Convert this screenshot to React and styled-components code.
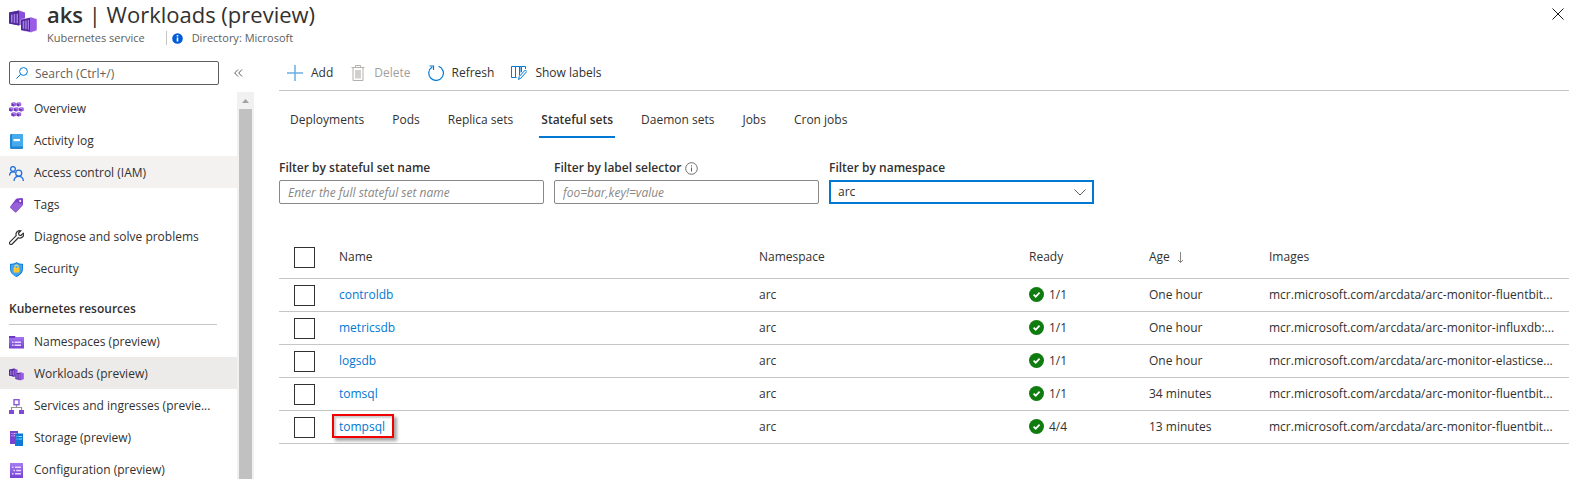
import React from "react";
import styled, { createGlobalStyle, css } from "styled-components";

const GlobalStyle = createGlobalStyle`
  *, *::before, *::after { box-sizing: border-box; }
  html, body { margin: 0; background: #fff; }
  body, button, input, select {
    font-family: "Open Sans", "Noto Sans", sans-serif;
    font-size: 12px;
    line-height: 16px;
    color: #323130;
  }
  button { border: 0; padding: 0; background: none; }
  a { text-decoration: none; color: inherit; }
`;

const Page = styled.div`
  display: flex;
  flex-direction: column;
  height: 100vh;
  overflow: hidden;
`;

const Header = styled.header`
  display: flex;
  flex: none;
  height: 52px;
  padding: 0 19px 0 9px;
`;

const HeaderIcon = styled.span`
  width: 38px;
  padding-top: 10px;
`;

const Titles = styled.div`
  flex: 1;
`;

const Title = styled.h1`
  margin: 0;
  font-size: 22px;
  line-height: 28px;
  font-weight: 400;
  white-space: nowrap;
  b { font-weight: 600; }
`;

const Subtitle = styled.div`
  display: flex;
  align-items: center;
  height: 20px;
  font-size: 11px;
  color: #605e5c;
  svg { margin-right: 9px; }
`;

const Divider = styled.span`
  width: 1px;
  height: 14px;
  margin: 0 5px 0 21px;
  background: #c8c6c4;
`;

const Close = styled.button`
  align-self: flex-start;
  height: 12px;
  width: 12px;
  margin-top: 8px;
  line-height: 0;
`;

const Body = styled.div`
  display: flex;
  flex: 1;
  min-height: 0;
`;

const Sidebar = styled.aside`
  display: flex;
  flex: none;
  flex-direction: column;
  width: 254px;
`;

const SearchRow = styled.div`
  display: flex;
  align-items: center;
  flex: none;
  gap: 15px;
  height: 40px;
  padding: 2px 0 0 9px;
`;

const SearchBox = styled.label`
  display: flex;
  align-items: center;
  gap: 7px;
  width: 210px;
  height: 24px;
  padding: 0 6px;
  border: 1px solid #605e5c;
  border-radius: 2px;
  input {
    flex: 1;
    min-width: 0;
    padding: 1px 0 0;
    border: 0;
    outline: 0;
    &::placeholder { color: #605e5c; opacity: 1; }
  }
`;

const CollapseButton = styled.button`
  line-height: 0;
`;

const NavArea = styled.div`
  display: flex;
  flex: 1;
  min-height: 0;
`;

const Nav = styled.nav`
  flex: 1;
  min-width: 0;
  overflow: hidden;
`;

const NavItem = styled.a`
  display: flex;
  align-items: center;
  gap: 10px;
  height: 32px;
  padding: 2px 0 0 9px;
  white-space: nowrap;
  background: ${(p) => (p.$state === "active" ? "#edebe9" : p.$state === "hover" ? "#f3f2f1" : "transparent")};
  svg { flex: none; }
`;

const NavHeading = styled.h2`
  margin: 0 20px 0 9px;
  padding: 17px 0 7px;
  border-bottom: 1px solid #c8c6c4;
  font-size: 12px;
  line-height: 16px;
  font-weight: 600;
`;

const ScrollTrack = styled.div`
  display: flex;
  flex-direction: column;
  align-items: center;
  width: 17px;
  background: #f1f1f1;
  svg { flex: none; }
`;

const ScrollThumb = styled.div`
  flex: 1;
  width: 13px;
  background: #c1c1c1;
`;

const Main = styled.main`
  flex: 1;
  min-width: 0;
  padding: 0 14px 0 25px;
`;

const Toolbar = styled.div`
  display: flex;
  align-items: center;
  gap: 17px;
  height: 39px;
  padding: 4px 8px 0;
  border-bottom: 1px solid #c8c6c4;
`;

const ToolButton = styled.button`
  display: flex;
  align-items: center;
  gap: 8px;
  color: ${(p) => (p.disabled ? "#a19f9d" : "#323130")};
`;

const Tabs = styled.div`
  display: flex;
  gap: 24px;
  margin-top: 13px;
  padding-left: 9px;
`;

const Tab = styled.button`
  height: 34px;
  padding: 0 2px;
  border-bottom: 2px solid transparent;
  ${(p) =>
    p.$selected &&
    css`
      border-color: #0078d4;
      font-weight: 600;
    `}
`;

const Filters = styled.div`
  display: flex;
  gap: 10px;
  margin-top: 22px;
`;

const Filter = styled.div`
  width: 265px;
  label {
    display: flex;
    align-items: center;
    gap: 4px;
    height: 16px;
    margin-bottom: 4px;
    font-weight: 600;
  }
`;

const TextInput = styled.input`
  width: 100%;
  height: 24px;
  padding: 0 8px;
  border: 1px solid #8a8886;
  border-radius: 2px;
  &::placeholder { color: #8a8886; opacity: 1; font-style: italic; }
`;

const SelectBox = styled.div`
  display: grid;
  align-items: center;
  select, svg { grid-area: 1 / 1; }
  svg { justify-self: end; margin-right: 8px; pointer-events: none; }
`;

const Select = styled.select`
  appearance: none;
  width: 100%;
  height: 24px;
  padding: 0 7px;
  border: 2px solid #0078d4;
  background: #fff;
`;

const Table = styled.table`
  width: 100%;
  margin-top: 31px;
  border-collapse: collapse;
  table-layout: fixed;
  th, td {
    padding: 0;
    border-bottom: 1px solid #c8c6c4;
    text-align: left;
    white-space: nowrap;
  }
  th { height: 43px; padding-top: 1px; font-weight: 500; }
  th svg { margin-left: 3px; vertical-align: -2px; }
  td { height: 33px; }
`;

const Col = styled.col`
  width: ${(p) => p.$width};
`;

const Check = styled.input`
  appearance: none;
  display: block;
  width: 21px;
  height: 21px;
  margin: 2px 0 0 15px;
  border: 1px solid #323130;
  background: #fff;
`;

const ReadyCell = styled.span`
  display: flex;
  align-items: center;
  gap: 5px;
`;

const ResourceLink = styled.a`
  position: relative;
  color: #0078d4;
  ${(p) =>
    p.$marked &&
    css`
      &::after {
        content: "";
        position: absolute;
        inset: -4px -9px -3px -7px;
        border: 2px solid #f00000;
        box-shadow: 3px 3px 3px rgba(0, 0, 0, 0.35), inset 2px 2px 2px rgba(0, 0, 0, 0.2);
      }
    `}
`;

const WorkloadIcon = ({ width, height }) => (
  <svg width={width} height={height} viewBox="0 0 28 22" aria-hidden="true">
    <path d="M0 2 10 0l6 2v11l-6 2-10-2Z" fill="#8a4fdb" />
    <path d="M0 2 10 0v15L0 13Z" fill="#4f2a96" />
    <path d="M2 4h1.500v8H2zM4.700 3.600h1.500v8.800H4.700zM7.500 3.200H9v9.600H7.500z" fill="#a57be8" />
    <path d="M12 9 22 6.500l6 2V20l-6 2-10-2Z" fill="#9a5be6" stroke="#fff" strokeWidth=".5" />
    <path d="M12 9.300 21 7.500v13.500l-9-1.500Z" fill="#4f2a96" />
    <path d="M13.700 10.500h1.600v7.800h-1.600zM16.200 10h1.500v8.800h-1.500zM18.700 9.500H20v9.800h-1.300z" fill="#a57be8" />
  </svg>
);

const PurpleGradient = ({ id }) => (
  <defs>
    <linearGradient id={id} x1="0" y1="0" x2="0" y2="1">
      <stop offset="0" stopColor="#a67af4" />
      <stop offset="1" stopColor="#7541d3" />
    </linearGradient>
  </defs>
);

const navIcons = {
  overview: (
    <g>
      {[[4.800, 2.300], [9.900, 2.300], [2.300, 7.300], [7.400, 7.300], [12.500, 7.300], [4.800, 12.300], [9.900, 12.300]].map(([x, y]) => (
        <g key={`${x}-${y}`} transform={`translate(${x} ${y})`}>
          <path d="M-2.300-1.400 0-2.200l2.300.8v2.800L0 2.200l-2.300-.8Z" fill="#9b5fe0" />
          <path d="M-2.300-1.400 0-.6v2.800l-2.300-.8Z" fill="#6a35b5" />
          <path d="M-2.300-1.400 0-2.200l2.300.8L0-.6Z" fill="#b99af0" />
        </g>
      ))}
    </g>
  ),
  log: (
    <g>
      <rect x="1" y="0" width="13" height="15" rx="1.200" fill="#2286d3" />
      <path d="M3 0h10q1 0 1 1v11.500H3z" fill="#45abec" />
      <rect x="4.500" y="5" width="6.500" height="2.200" fill="#fff" />
    </g>
  ),
  access: (
    <g fill="none" stroke="#1f6fe0" strokeWidth="1.300">
      <circle cx="4" cy="3" r="2.400" />
      <path d="M.6 9.500C.6 7 2 5.800 4 5.800c.8 0 1.500.2 2 .6" />
      <circle cx="9.700" cy="7.200" r="3" />
      <path d="M5 15c.2-3 2-4.600 4.700-4.600s4.500 1.600 4.700 4.600" />
    </g>
  ),
  tags: (
    <g>
      <path d="M8 .5 13 0q1 0 1 1v5.500q0 .6-.4 1L7.200 14.300q-.6.500-1.200 0L1.300 9.700q-.5-.6 0-1.200L7 1Q7.400.5 8 .5Z" fill="#7d42c8" />
      <path d="M7 4 1.300 8.800 6.500 14 14 6.500Z" fill="#a878e2" opacity=".6" />
      <circle cx="11.200" cy="3" r="1" fill="#fff" />
    </g>
  ),
  wrench: (
    <path
      d="M14.300 3.200 12 5.500l-2-.5-.5-2L11.800.8C9.500.1 7.300 1.500 7 3.800c-.1.700 0 1.300.2 1.900L1 11.900c-.7.700-.7 1.600-.1 2.200s1.600.6 2.300-.1l6.100-6.200c2.800 1 5.700-1 5.400-3.800q0-.5-.4-.8Z"
      fill="none" stroke="#323130" strokeWidth="1.200"
    />
  ),
  security: (
    <g>
      <path d="M7.500 0C9.500 1.500 12 1.700 14 1.800V7c0 4-3.500 6.500-6.500 8C4.500 13.500 1 11 1 7V1.800C3 1.700 5.500 1.500 7.500 0Z" fill="#1482d8" />
      <path d="M7.500 1.200C9.300 2.400 11.300 2.700 13 2.800V7c0 3.300-2.800 5.400-5.500 6.800S2 10.300 2 7V2.800c1.700-.1 3.700-.4 5.500-1.600Z" fill="#42a5ee" />
      <rect x="4.600" y="5.800" width="5.800" height="4.600" rx=".6" fill="#ffc72c" />
      <path d="M5.900 6V4.700a1.600 1.600 0 0 1 3.200 0V6" fill="none" stroke="#ffd968" strokeWidth="1.100" />
    </g>
  ),
  namespaces: (
    <g>
      <PurpleGradient id="gNamespace" />
      <path d="M0 1h6l1 1h8v11.500H0Z" fill="url(#gNamespace)" />
      <path d="M0 1h6v2H0Z" fill="#6d38c4" />
      <path d="M3 6.500h1.500V8H3zM5.500 6.500H12V8H5.500zM3 9.500h1.500V11H3zM5.500 9.500H12V11H5.500z" fill="#e4d8fb" />
    </g>
  ),
  services: (
    <g>
      <path d="M7.500 5v4M2.500 11V8.500h10V11" fill="none" stroke="#949494" strokeWidth="1.200" />
      <rect x="5" y=".7" width="5" height="5" fill="#fff" stroke="#8a56dc" strokeWidth="1.400" />
      <rect x="0" y="11" width="5" height="4" fill="#7f49d6" />
      <rect x="10" y="11" width="5" height="4" fill="#7f49d6" />
    </g>
  ),
  storage: (
    <g>
      <rect x="1" y="0" width="8" height="13" fill="#7a43cf" />
      <path d="M2.500 2h1v1h-1zM4.500 2H8v1H4.500zM2.500 4.200h1v1h-1zM4.500 4.200H8v1H4.500z" fill="#d5c2f7" />
      <rect x="6" y="2.500" width="8" height="12.500" fill="#0f7ad4" />
      <path d="M7.500 5h1v1h-1zM9.500 5H13v1H9.500zM7.500 7.500h1v1h-1zM9.500 7.500H13v1H9.500z" fill="#8fe0ff" />
    </g>
  ),
  config: (
    <g>
      <PurpleGradient id="gConfig" />
      <rect x="1" y="0" width="13" height="15" fill="url(#gConfig)" />
      <path d="M3 3.500h1.500V5H3zM6 3.500h6V5H6zM4.500 6.800H6v1.400H4.500zM7.200 6.800H12v1.400H7.200zM3 10h1.500v1.500H3zM6 10h6v1.500H6z" fill="#e4d8fb" />
    </g>
  ),
};

const NavIcon = ({ name }) =>
  name === "workloads" ? (
    <WorkloadIcon width={15} height={15} />
  ) : (
    <svg width="15" height="15" viewBox="0 0 15 15" aria-hidden="true">{navIcons[name]}</svg>
  );

const toolIcons = {
  add: <path d="M8 0v16M0 8h16" stroke="#69afe5" strokeWidth="1.500" fill="none" />,
  remove: (
    <g fill="none" stroke="#b3b0ad">
      <path d="M1.500 2.500h13M5.500 2V.5h5V2M3 3v12.500h10V3" />
      <path d="M6 5v8.500M8 5v8.500M10 5v8.500" strokeWidth="1.200" />
    </g>
  ),
  refresh: (
    <g fill="none" stroke="#0078d4" strokeWidth="1.200">
      <path d="M10.500 1.200A7.300 7.300 0 1 1 4.200 1.900" />
      <path d="M1.500 1h4v4" />
    </g>
  ),
  labels: (
    <g fill="none" stroke="#0078d4">
      <path d="M.5 1.500h4v11h-4zM5.500 12.500h-1v-11h4v9M8.500 9.500v-8h1.500v6M10.500 7V1.500h4V4" />
      <path d="m7.500 14.500.8-3 6-6.500 1.500 1.500-6 6.700Z" fill="#fff" />
    </g>
  ),
};

const ToolIcon = ({ name }) => (
  <svg width="16" height="16" viewBox="0 0 16 16" aria-hidden="true">{toolIcons[name]}</svg>
);

const generalNav = [
  ["overview", "Overview"],
  ["log", "Activity log"],
  ["access", "Access control (IAM)", "hover"],
  ["tags", "Tags"],
  ["wrench", "Diagnose and solve problems"],
  ["security", "Security"],
];

const resourceNav = [
  ["namespaces", "Namespaces (preview)"],
  ["workloads", "Workloads (preview)", "active"],
  ["services", "Services and ingresses (previe..."],
  ["storage", "Storage (preview)"],
  ["config", "Configuration (preview)"],
];

const tools = [
  ["add", "Add"],
  ["remove", "Delete", true],
  ["refresh", "Refresh"],
  ["labels", "Show labels"],
];

const tabs = ["Deployments", "Pods", "Replica sets", "Stateful sets", "Daemon sets", "Jobs", "Cron jobs"];

const rows = [
  ["controldb", "1/1", "One hour", "fluentbit..."],
  ["metricsdb", "1/1", "One hour", "influxdb:..."],
  ["logsdb", "1/1", "One hour", "elasticse..."],
  ["tomsql", "1/1", "34 minutes", "fluentbit..."],
  ["tompsql", "4/4", "13 minutes", "fluentbit..."],
];

const NavList = ({ items }) =>
  items.map(([icon, label, state]) => (
    <NavItem key={label} href="#" $state={state}>
      <NavIcon name={icon} />
      {label}
    </NavItem>
  ));

export default function App() {
  return (
    <Page>
      <GlobalStyle />
      <Header>
        <HeaderIcon><WorkloadIcon width={28} height={23} /></HeaderIcon>
        <Titles>
          <Title><b>aks</b> | Workloads (preview)</Title>
          <Subtitle>
            Kubernetes service
            <Divider />
            <svg width="11" height="11" viewBox="0 0 11 11" aria-hidden="true">
              <circle cx="5.500" cy="5.500" r="5.300" fill="#015cda" />
              <path d="M4.700 4.500h1.600v4H4.700zM4.700 2h1.600v1.500H4.700z" fill="#fff" />
            </svg>
            Directory: Microsoft
          </Subtitle>
        </Titles>
        <Close aria-label="Close">
          <svg width="12" height="12" viewBox="0 0 12 12">
            <path d="m.5.500 11 11M11.500.5l-11 11" stroke="#1b1a19" fill="none" />
          </svg>
        </Close>
      </Header>
      <Body>
        <Sidebar>
          <SearchRow>
            <SearchBox>
              <svg width="12" height="12" viewBox="0 0 12 12" aria-hidden="true">
                <circle cx="7.500" cy="4.500" r="3.900" fill="none" stroke="#0078d4" />
                <path d="M4.700 7.300.4 11.600" stroke="#0078d4" />
              </svg>
              <input aria-label="Search" placeholder="Search (Ctrl+/)" />
            </SearchBox>
            <CollapseButton aria-label="Collapse menu">
              <svg width="9" height="8" viewBox="0 0 9 8">
                <path d="M4 .5.700 4 4 7.500M8 .5 4.700 4 8 7.500" fill="none" stroke="#605e5c" />
              </svg>
            </CollapseButton>
          </SearchRow>
          <NavArea>
            <Nav>
              <NavList items={generalNav} />
              <NavHeading>Kubernetes resources</NavHeading>
              <NavList items={resourceNav} />
            </Nav>
            <ScrollTrack>
              <svg width="17" height="17" viewBox="0 0 17 17" aria-hidden="true">
                <path d="m5 11 3.500-4 3.500 4Z" fill="#a3a3a3" />
              </svg>
              <ScrollThumb />
            </ScrollTrack>
          </NavArea>
        </Sidebar>
        <Main>
          <Toolbar>
            {tools.map(([icon, label, disabled]) => (
              <ToolButton key={label} disabled={disabled}>
                <ToolIcon name={icon} />
                {label}
              </ToolButton>
            ))}
          </Toolbar>
          <Tabs role="tablist">
            {tabs.map((tab) => (
              <Tab key={tab} role="tab" aria-selected={tab === "Stateful sets"} $selected={tab === "Stateful sets"}>
                {tab}
              </Tab>
            ))}
          </Tabs>
          <Filters>
            <Filter>
              <label htmlFor="set-name">Filter by stateful set name</label>
              <TextInput id="set-name" placeholder="Enter the full stateful set name" />
            </Filter>
            <Filter>
              <label htmlFor="selector">
                Filter by label selector
                <svg width="13" height="13" viewBox="0 0 13 13" aria-hidden="true">
                  <circle cx="6.500" cy="6.500" r="5.800" fill="none" stroke="#605e5c" strokeWidth=".9" />
                  <path d="M6.500 5.500v4M6.500 3.300v1.200" stroke="#605e5c" />
                </svg>
              </label>
              <TextInput id="selector" placeholder="foo=bar,key!=value" />
            </Filter>
            <Filter>
              <label htmlFor="namespace">Filter by namespace</label>
              <SelectBox>
                <Select id="namespace" defaultValue="arc"><option>arc</option></Select>
                <svg width="12" height="7" viewBox="0 0 12 7" aria-hidden="true">
                  <path d="m.5.500 5.500 5.500L11.500.5" fill="none" stroke="#605e5c" />
                </svg>
              </SelectBox>
            </Filter>
          </Filters>
          <Table>
            <colgroup>
              <Col $width="60px" />
              <Col $width="auto" />
              <Col $width="270px" />
              <Col $width="120px" />
              <Col $width="120px" />
              <Col $width="300px" />
            </colgroup>
            <thead>
              <tr>
                <th><Check type="checkbox" aria-label="Select all" /></th>
                <th>Name</th>
                <th>Namespace</th>
                <th>Ready</th>
                <th>
                  Age{" "}
                  <svg width="9" height="11" viewBox="0 0 9 11" aria-hidden="true">
                    <path d="M4.500 0v10.500M2 8l2.500 2.500L7 8" fill="none" stroke="#797775" strokeWidth=".9" />
                  </svg>
                </th>
                <th>Images</th>
              </tr>
            </thead>
            <tbody>
              {rows.map(([name, ready, age, image]) => (
                <tr key={name}>
                  <td><Check type="checkbox" aria-label={`Select ${name}`} /></td>
                  <td><ResourceLink href="#" $marked={name === "tompsql"}>{name}</ResourceLink></td>
                  <td>arc</td>
                  <td>
                    <ReadyCell>
                      <svg width="15" height="16" viewBox="0 0 15 16" aria-hidden="true">
                        <circle cx="7.500" cy="7.500" r="7.500" fill="#107c10" />
                        <path d="m4.600 7.700 2.100 2 3.900-4" fill="none" stroke="#fff" strokeWidth="1.700" />
                      </svg>
                      {ready}
                    </ReadyCell>
                  </td>
                  <td>{age}</td>
                  <td>mcr.microsoft.com/arcdata/arc-monitor-{image}</td>
                </tr>
              ))}
            </tbody>
          </Table>
        </Main>
      </Body>
    </Page>
  );
}
